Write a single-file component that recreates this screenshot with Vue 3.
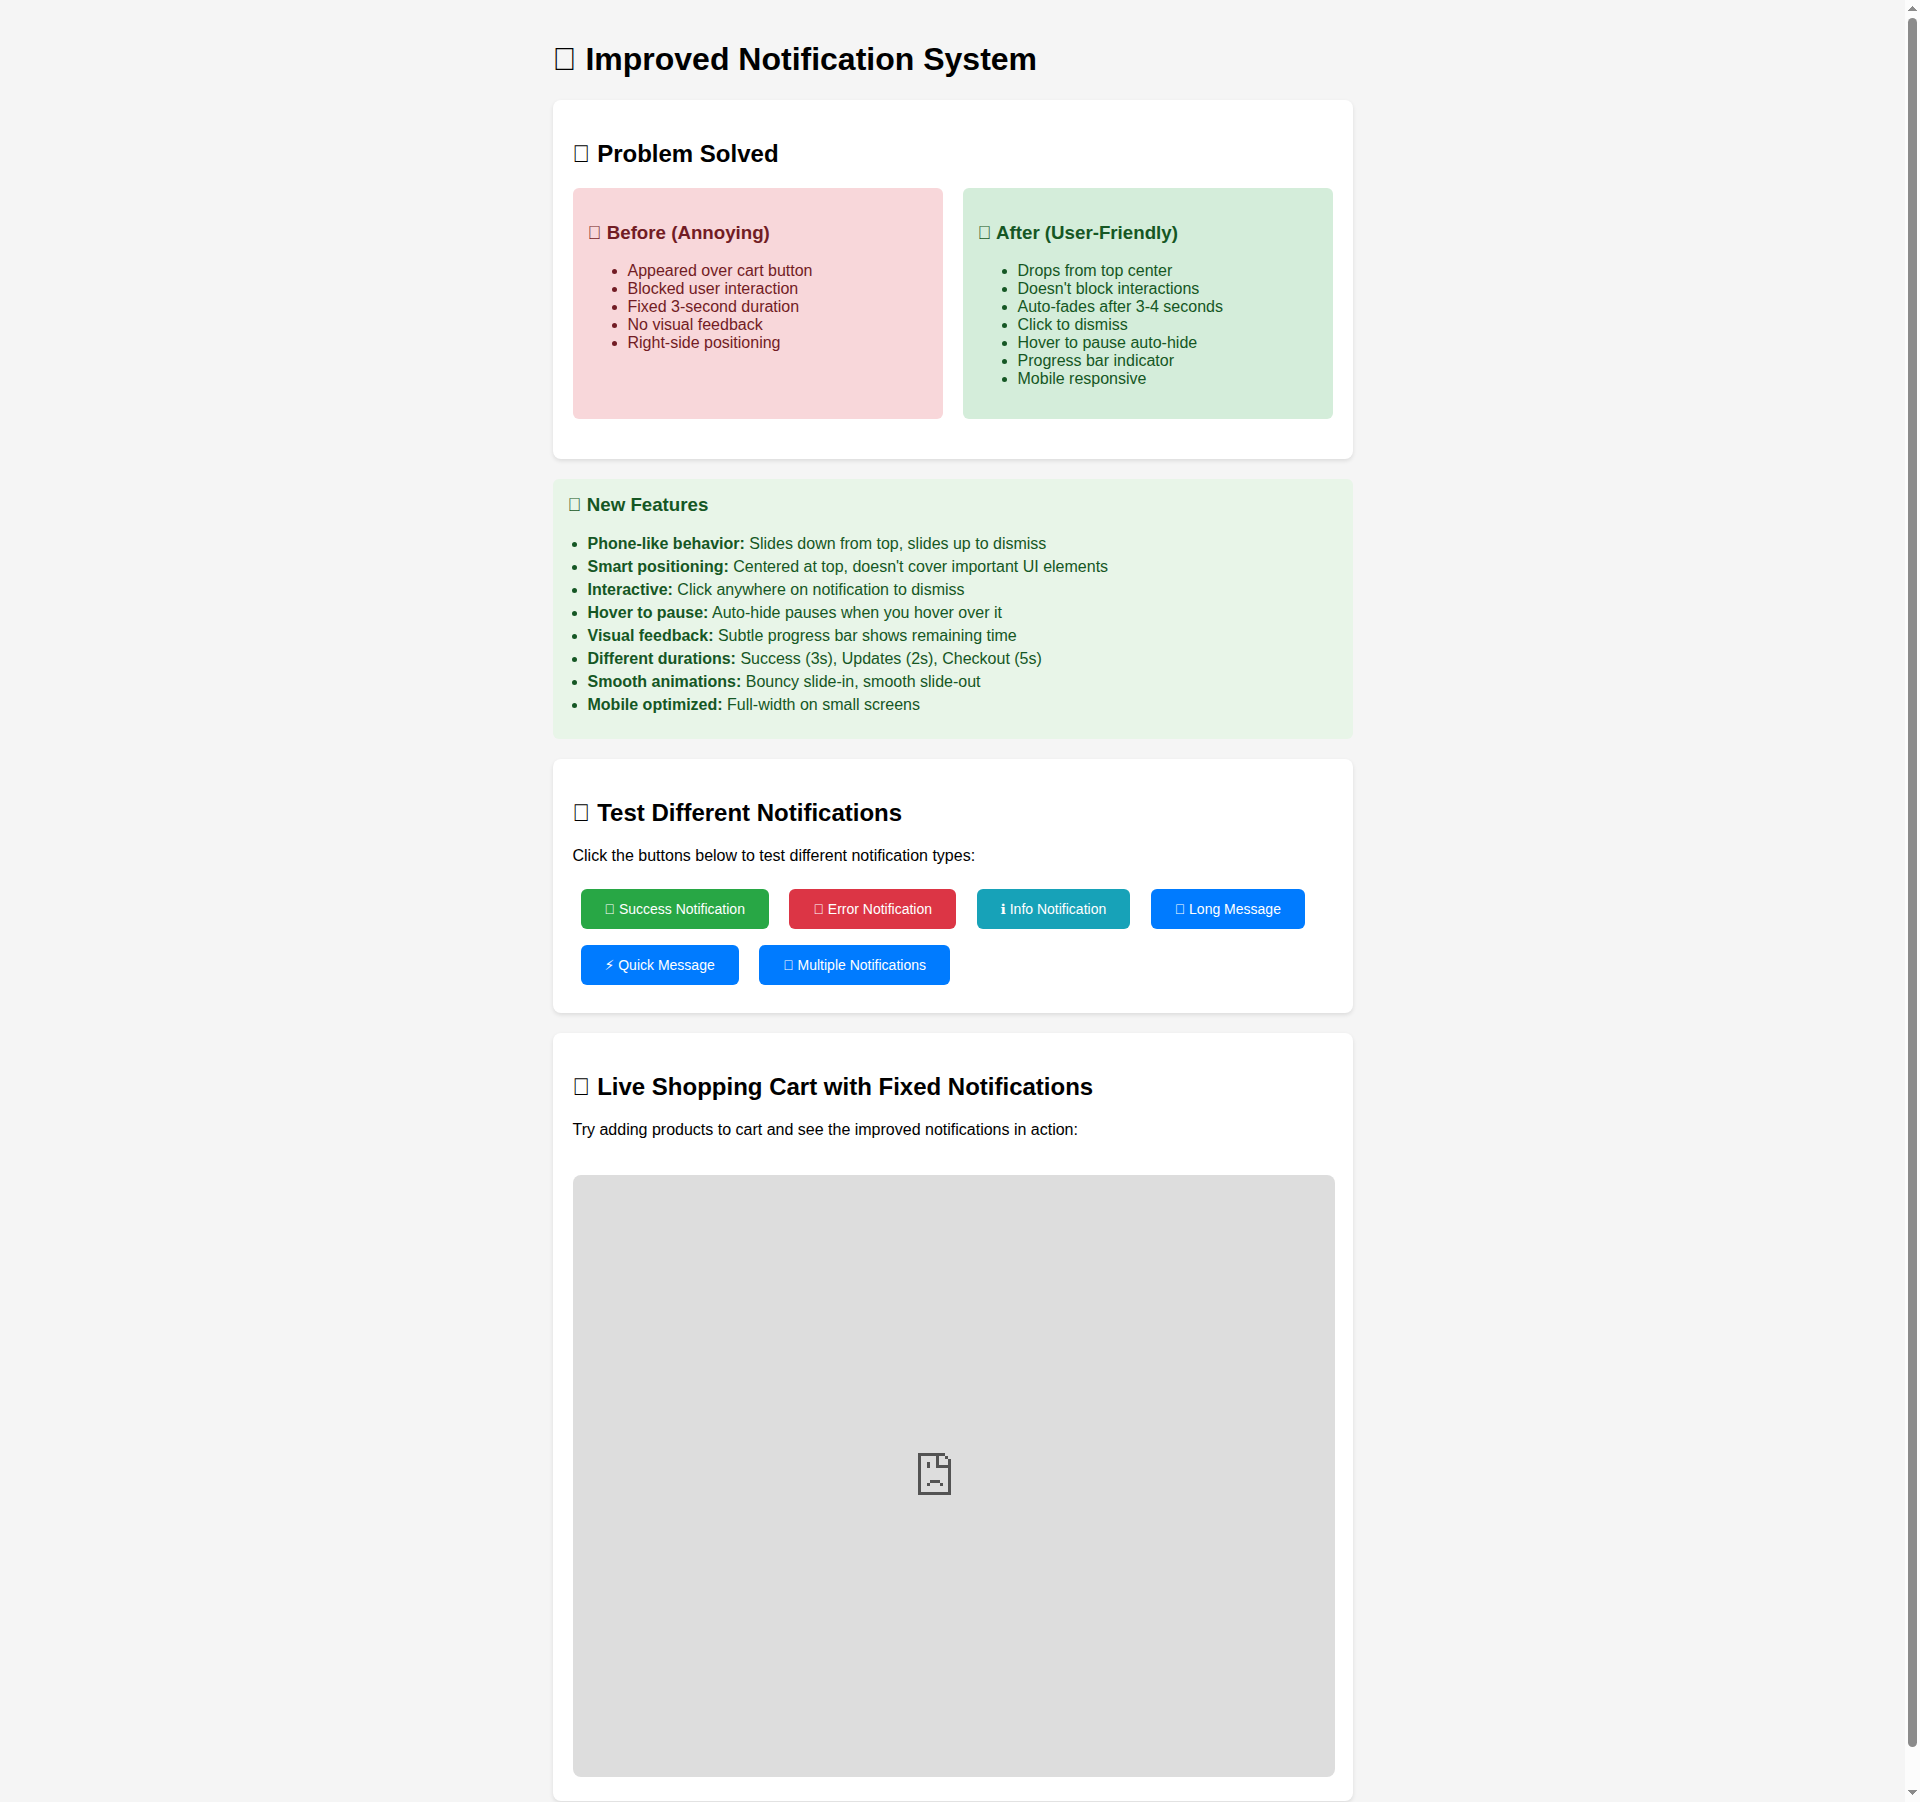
<script setup>
const box = '\u{F0000}'
const before = [
  'Appeared over cart button',
  'Blocked user interaction',
  'Fixed 3-second duration',
  'No visual feedback',
  'Right-side positioning',
]
const after = [
  'Drops from top center',
  "Doesn't block interactions",
  'Auto-fades after 3-4 seconds',
  'Click to dismiss',
  'Hover to pause auto-hide',
  'Progress bar indicator',
  'Mobile responsive',
]
const features = [
  ['Phone-like behavior:', 'Slides down from top, slides up to dismiss'],
  ['Smart positioning:', "Centered at top, doesn't cover important UI elements"],
  ['Interactive:', 'Click anywhere on notification to dismiss'],
  ['Hover to pause:', 'Auto-hide pauses when you hover over it'],
  ['Visual feedback:', 'Subtle progress bar shows remaining time'],
  ['Different durations:', 'Success (3s), Updates (2s), Checkout (5s)'],
  ['Smooth animations:', 'Bouncy slide-in, smooth slide-out'],
  ['Mobile optimized:', 'Full-width on small screens'],
]
</script>

<template>
  <div class="window">
    <main class="page">
      <h1><span class="box">{{ box }}</span> Improved Notification System</h1>

      <section class="card">
        <h2><span class="box">{{ box }}</span> Problem Solved</h2>
        <div class="comparison">
          <div class="panel before">
            <h3><span class="box">{{ box }}</span> Before (Annoying)</h3>
            <ul>
              <li v-for="item in before" :key="item">{{ item }}</li>
            </ul>
          </div>
          <div class="panel after">
            <h3><span class="box">{{ box }}</span> After (User-Friendly)</h3>
            <ul>
              <li v-for="item in after" :key="item">{{ item }}</li>
            </ul>
          </div>
        </div>
      </section>

      <section class="features">
        <h3><span class="box">{{ box }}</span> New Features</h3>
        <ul>
          <li v-for="[name, text] in features" :key="name"><strong>{{ name }}</strong> {{ text }}</li>
        </ul>
      </section>

      <section class="card">
        <h2><span class="box">{{ box }}</span> Test Different Notifications</h2>
        <p>Click the buttons below to test different notification types:</p>
        <button class="btn success"><span class="box">{{ box }}</span> Success Notification</button>{{ ' ' }}
        <button class="btn error"><span class="box">{{ box }}</span> Error Notification</button>{{ ' ' }}
        <button class="btn info"><span class="info-sign">&#x2139;</span> Info Notification</button>{{ ' ' }}
        <button class="btn"><span class="box">{{ box }}</span> Long Message</button>{{ ' ' }}
        <button class="btn"><span class="symbol">&#x26A1;&#xFE0E;</span> Quick Message</button>{{ ' ' }}
        <button class="btn"><span class="box">{{ box }}</span> Multiple Notifications</button>
      </section>

      <section class="card">
        <h2><span class="box">{{ box }}</span> Live Shopping Cart with Fixed Notifications</h2>
        <p>Try adding products to cart and see the improved notifications in action:</p>
        <div class="frame">
          <svg class="sad" width="33" height="42" viewBox="0 0 33 42" fill="#535353" shape-rendering="crispEdges">
            <path d="M0 0H27V3H21V12H33V15H18V3H3V39H30V15H33V42H0ZM27 3H30V6H27ZM30 6H33V12H30ZM9 9H12V15H9ZM12 27H22V30H12ZM9 30H12V33H9ZM22 30H25V33H22Z" />
          </svg>
        </div>
      </section>
    </main>

    <div class="scrollbar">
      <svg width="9" height="5" viewBox="0 0 9 5" fill="#8b8b8b" shape-rendering="crispEdges">
        <path d="M4 0H5V1H6V2H7V3H8V4H9V5H0V4H1V3H2V2H3V1H4Z" />
      </svg>
      <div class="thumb"></div>
      <svg width="9" height="5" viewBox="0 0 9 5" fill="#8b8b8b" shape-rendering="crispEdges">
        <path d="M0 0H9V1H8V2H7V3H6V4H5V5H4V4H3V3H2V2H1V1H0Z" />
      </svg>
    </div>
  </div>
</template>

<style>
html,
body {
  background: #f5f5f5;
}
</style>

<style scoped>
.window {
  display: flex;
  height: 1802px;
  overflow: hidden;
  background: #f5f5f5;
  font-family: "Liberation Sans", Arial, sans-serif;
  font-size: 16px;
  color: #000;
}
.page {
  width: 800px;
  padding: 20px;
  margin: 0 auto;
}
.card {
  background: #fff;
  padding: 20px;
  border-radius: 8px;
  margin: 20px 0;
  box-shadow: 0 2px 4px rgba(0, 0, 0, 0.1);
}
h1 {
  margin: 21.44px 0;
  font-size: 32px;
}
h2 {
  margin: 19.92px 0;
  font-size: 24px;
}
h3 {
  margin: 18.72px 0;
  font-size: 18.72px;
}
.box {
  display: inline-block;
}
.comparison {
  display: grid;
  grid-template-columns: 1fr 1fr;
  gap: 20px;
  margin: 20px 0;
}
.panel {
  padding: 15px;
  border-radius: 6px;
}
.before {
  background: #f8d7da;
  color: #721c24;
}
.after {
  background: #d4edda;
  color: #155724;
}
.features {
  background: #e8f5e8;
  color: #155724;
  padding: 15px;
  border-radius: 6px;
  margin: 20px 0;
}
.features h3 {
  margin-top: 0;
}
.features ul {
  margin: 10px 0;
  padding-left: 20px;
}
.features li {
  margin: 5px 0;
}
.btn {
  background: #007bff;
  color: #fff;
  border: none;
  padding: 12px 24px;
  border-radius: 6px;
  margin: 8px;
  font-family: inherit;
  font-size: 14px;
  line-height: 16px;
}
.btn.success {
  background: #28a745;
}
.btn.error {
  background: #dc3545;
}
.btn.info {
  background: #17a2b8;
}
.symbol {
  font-family: "Liberation Sans", "DejaVu Sans", sans-serif;
}
.info-sign {
  font-family: "DejaVu Sans", sans-serif;
  line-height: 0;
}
.frame {
  display: flex;
  align-items: center;
  justify-content: center;
  box-sizing: border-box;
  width: 762px;
  height: 602px;
  margin: 36px 0 4px;
  border-radius: 8px;
  background: #ddd;
}
.sad {
  margin: 0 39px 4px 0;
}
.scrollbar {
  display: flex;
  flex-direction: column;
  align-items: center;
  gap: 7px;
  width: 15px;
  box-sizing: border-box;
  padding: 6px 3px 7px;
  background: #fcfcfc;
}
.scrollbar svg {
  flex: none;
}
.thumb {
  width: 9px;
  flex: 1;
  margin-bottom: 36px;
  border-radius: 5px;
  background: #8b8b8b;
}
</style>
